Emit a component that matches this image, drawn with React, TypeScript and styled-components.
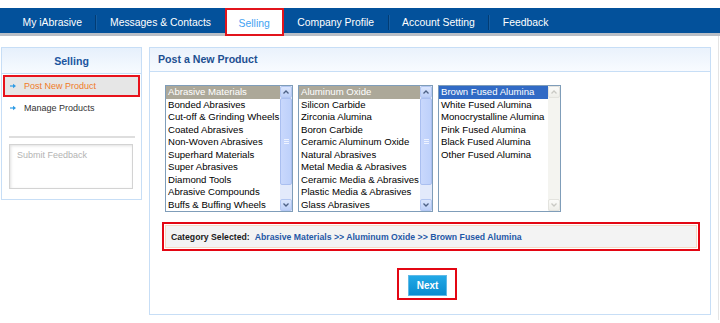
import React from 'react';
import styled, { createGlobalStyle } from 'styled-components';

const Global = createGlobalStyle`
  html, body { margin: 0; padding: 0; background: #fff; }
  body { font-family: "Liberation Sans", Arial, sans-serif; }
  * { box-sizing: border-box; }
`;

const Page = styled.div`
  width: 720px;
`;

const NavBar = styled.nav`
  margin-top: 8px;
  height: 28px;
  background: #03519b;
  border-bottom: 3px solid #b9bec6;
  display: flex;
  padding-left: 9px;
`;

const NavItem = styled.div<{ $active?: boolean }>`
  display: flex;
  align-items: center;
  padding: ${(p) => (p.$active ? '3px 12px 0' : '4px 13.5px 0')};
  font-size: 10.4px;
  white-space: nowrap;
  color: ${(p) => (p.$active ? '#3fa3f2' : '#ffffff')};
  ${(p) =>
    p.$active &&
    `
    background: #fff;
    border: 2px solid #e2141c;
    margin-bottom: -3px;
  `}
`;

const NavSep = styled.div`
  width: 1px;
  margin: 7px 0 3px;
  background: rgba(0, 0, 0, 0.25);
  box-shadow: 1px 0 0 rgba(255, 255, 255, 0.08);
`;

const Body = styled.div`
  display: flex;
  align-items: flex-start;
  gap: 7px;
  padding: 11px 0 0 1px;
  width: 719px;
  min-height: calc(100vh - 39px);
  border-right: 1px solid #e4e4e4;
`;

const Sidebar = styled.aside`
  width: 141px;
  border: 1px solid #c7def6;
  background: #fff;
  padding-bottom: 10px;
`;

const SideHeader = styled.div`
  height: 26px;
  border-bottom: 1px solid #c7def6;
  background: linear-gradient(#e6f0fc, #f7fbff);
  display: flex;
  align-items: center;
  justify-content: center;
  font-weight: bold;
  font-size: 10.6px;
  color: #1b55a0;
`;

const Menu = styled.div`
  padding: 1px 1px 0;
  display: flex;
  flex-direction: column;
`;

const MenuItem = styled.div<{ $active?: boolean }>`
  height: 22px;
  display: flex;
  align-items: center;
  gap: 8px;
  padding-left: 5px;
  font-size: 9px;
  border: 2px solid ${(p) => (p.$active ? '#e8121b' : 'transparent')};
  background: ${(p) => (p.$active ? '#e6e6e6' : 'transparent')};
  color: ${(p) => (p.$active ? '#f07b26' : '#333')};
`;

const SideRule = styled.div`
  height: 2px;
  margin: 17px 6px 0 7px;
  background: #dedede;
`;

const FeedbackBox = styled.div`
  height: 45px;
  margin: 6px 8px 0 7px;
  border: 1px solid #d3d3d3;
  box-shadow: inset 1px 1px 3px rgba(0, 0, 0, 0.12);
  padding: 5px 7px;
  font-size: 9px;
  color: #b3b3b3;
`;

const Main = styled.section`
  width: 562px;
  border: 1px solid #c7def6;
  background: #fff;
`;

const MainHeader = styled.div`
  height: 24px;
  border-bottom: 1px solid #c7def6;
  background: linear-gradient(#eaf2fc, #f8fbff);
  display: flex;
  align-items: center;
  padding: 0 0 2px 8px;
  font-weight: bold;
  font-size: 10.6px;
  color: #1d4f91;
`;

const Content = styled.div`
  padding: 13px 10px 14px 12px;
  display: flex;
  flex-direction: column;
`;

const Lists = styled.div`
  display: flex;
  gap: 5px;
  margin-left: 3px;
`;

const ListBox = styled.div<{ $w: number }>`
  width: ${(p) => p.$w}px;
  height: 127px;
  border: 1px solid #7f9db9;
  display: flex;
  background: #fff;
`;

const Options = styled.div`
  flex: 1;
  min-width: 0;
  overflow: hidden;
`;

const Option = styled.div<{ $sel?: 'inactive' | 'active' }>`
  height: 12.5px;
  line-height: 12.5px;
  padding-left: 2px;
  font-size: 9.6px;
  white-space: nowrap;
  overflow: hidden;
  color: ${(p) => (p.$sel ? '#fff' : '#000')};
  background: ${(p) =>
    p.$sel === 'inactive' ? '#aca899' : p.$sel === 'active' ? '#316ac5' : 'transparent'};
`;

const ScrollBar = styled.div<{ $disabled?: boolean }>`
  width: 12px;
  display: flex;
  flex-direction: column;
  background: ${(p) => (p.$disabled ? '#f4f4f0' : '#e3eafb')};
`;

const ScrollButton = styled.div<{ $disabled?: boolean }>`
  height: 12px;
  display: flex;
  align-items: center;
  justify-content: center;
  border: 1px solid ${(p) => (p.$disabled ? '#e3e3de' : '#b3c7f2')};
  border-radius: 2px;
  background: ${(p) =>
    p.$disabled ? 'linear-gradient(#fbfbf9, #eeeee9)' : 'linear-gradient(#dbe6fd, #bccff8)'};
`;

const Track = styled.div`
  flex: 1;
  display: flex;
  flex-direction: column;
`;

const Thumb = styled.div<{ $h: number }>`
  height: ${(p) => p.$h}px;
  border: 1px solid #aabff0;
  border-radius: 2px;
  background: linear-gradient(90deg, #c9d8fc, #bdd0fa);
  display: flex;
  align-items: center;
  justify-content: center;
`;

const CategoryFrame = styled.div`
  margin-top: 10px;
  border: 2px solid #e30613;
  padding: 1px;
`;

const CategoryInner = styled.div`
  height: 23px;
  border: 1px solid #f6d9c4;
  background: #f3f3f3;
  display: flex;
  align-items: center;
  padding-left: 5px;
  font-size: 8.7px;
  font-weight: bold;
  color: #1a1a1a;
`;

const CategoryPath = styled.span`
  color: #1f58a6;
  margin-left: 5px;
`;

const NextRow = styled.div`
  margin-top: 17px;
  display: flex;
  justify-content: center;
  padding-right: 8px;
`;

const NextFrame = styled.div`
  border: 2px solid #e30613;
  padding: 5px 8px 2px 9px;
`;

const NextButton = styled.button`
  width: 39px;
  height: 21px;
  border: 1px solid #5fb9e6;
  background: linear-gradient(#22a8e6, #0a8ccf);
  color: #fff;
  font-family: "Liberation Sans", Arial, sans-serif;
  font-weight: bold;
  font-size: 10px;
  padding: 0;
  display: flex;
  align-items: center;
  justify-content: center;
`;

const Arrow = () => (
  <svg width="6" height="6" viewBox="0 0 6 6">
    <path d="M0 3 H4" stroke="#2d9be5" strokeWidth="1.2" />
    <path d="M3 0.8 L6 3 L3 5.2 Z" fill="#2d9be5" />
  </svg>
);

const Chevron = ({ up, color }: { up?: boolean; color: string }) => (
  <svg width="6" height="4" viewBox="0 0 6 4">
    <path
      d={up ? 'M0.5 3.5 L3 1 L5.5 3.5' : 'M0.5 0.5 L3 3 L5.5 0.5'}
      stroke={color}
      strokeWidth="1.3"
      fill="none"
    />
  </svg>
);

const Grip = () => (
  <svg width="5" height="5" viewBox="0 0 5 5">
    <path d="M0 0.5 H5 M0 2.5 H5 M0 4.5 H5" stroke="#eef3ff" strokeWidth="1" />
  </svg>
);

const Scroller = ({ disabled }: { disabled?: boolean }) => {
  const c = disabled ? '#c9c9c4' : '#4d6185';
  return (
    <ScrollBar $disabled={disabled}>
      <ScrollButton $disabled={disabled}>
        <Chevron up color={c} />
      </ScrollButton>
      <Track>
        {!disabled && (
          <Thumb $h={87}>
            <Grip />
          </Thumb>
        )}
      </Track>
      <ScrollButton $disabled={disabled}>
        <Chevron color={c} />
      </ScrollButton>
    </ScrollBar>
  );
};

type ListProps = {
  width: number;
  items: string[];
  selected: number;
  mode: 'inactive' | 'active';
  disabledScroll?: boolean;
};

const SelectList = ({ width, items, selected, mode, disabledScroll }: ListProps) => (
  <ListBox $w={width}>
    <Options>
      {items.map((t, i) => (
        <Option key={t} $sel={i === selected ? mode : undefined}>
          {t}
        </Option>
      ))}
    </Options>
    <Scroller disabled={disabledScroll} />
  </ListBox>
);

const navItems = [
  'My iAbrasive',
  'Messages & Contacts',
  'Selling',
  'Company Profile',
  'Account Setting',
  'Feedback',
];
const activeNav = 2;

const list1 = [
  'Abrasive Materials',
  'Bonded Abrasives',
  'Cut-off & Grinding Wheels',
  'Coated Abrasives',
  'Non-Woven Abrasives',
  'Superhard Materials',
  'Super Abrasives',
  'Diamond Tools',
  'Abrasive Compounds',
  'Buffs & Buffing Wheels',
];
const list2 = [
  'Aluminum Oxide',
  'Silicon Carbide',
  'Zirconia Alumina',
  'Boron Carbide',
  'Ceramic Aluminum Oxide',
  'Natural Abrasives',
  'Metal Media & Abrasives',
  'Ceramic Media & Abrasives',
  'Plastic Media & Abrasives',
  'Glass Abrasives',
];
const list3 = [
  'Brown Fused Alumina',
  'White Fused Alumina',
  'Monocrystalline Alumina',
  'Pink Fused Alumina',
  'Black Fused Alumina',
  'Other Fused Alumina',
];

export default function App() {
  return (
    <Page>
      <Global />
      <NavBar>
        {navItems.map((t, i) => (
          <React.Fragment key={t}>
            {i > 0 && i !== activeNav && i - 1 !== activeNav && <NavSep />}
            <NavItem $active={i === activeNav}>{t}</NavItem>
          </React.Fragment>
        ))}
      </NavBar>
      <Body>
        <Sidebar>
          <SideHeader>Selling</SideHeader>
          <Menu>
            <MenuItem $active>
              <Arrow />
              Post New Product
            </MenuItem>
            <MenuItem>
              <Arrow />
              Manage Products
            </MenuItem>
          </Menu>
          <SideRule />
          <FeedbackBox>Submit Feedback</FeedbackBox>
        </Sidebar>
        <Main>
          <MainHeader>Post a New Product</MainHeader>
          <Content>
            <Lists>
              <SelectList width={128} items={list1} selected={0} mode="inactive" />
              <SelectList width={135} items={list2} selected={0} mode="inactive" />
              <SelectList width={123} items={list3} selected={0} mode="active" disabledScroll />
            </Lists>
            <CategoryFrame>
              <CategoryInner>
                Category Selected:
                <CategoryPath>
                  Abrasive Materials &gt;&gt; Aluminum Oxide &gt;&gt; Brown Fused Alumina
                </CategoryPath>
              </CategoryInner>
            </CategoryFrame>
            <NextRow>
              <NextFrame>
                <NextButton>Next</NextButton>
              </NextFrame>
            </NextRow>
          </Content>
        </Main>
      </Body>
    </Page>
  );
}
